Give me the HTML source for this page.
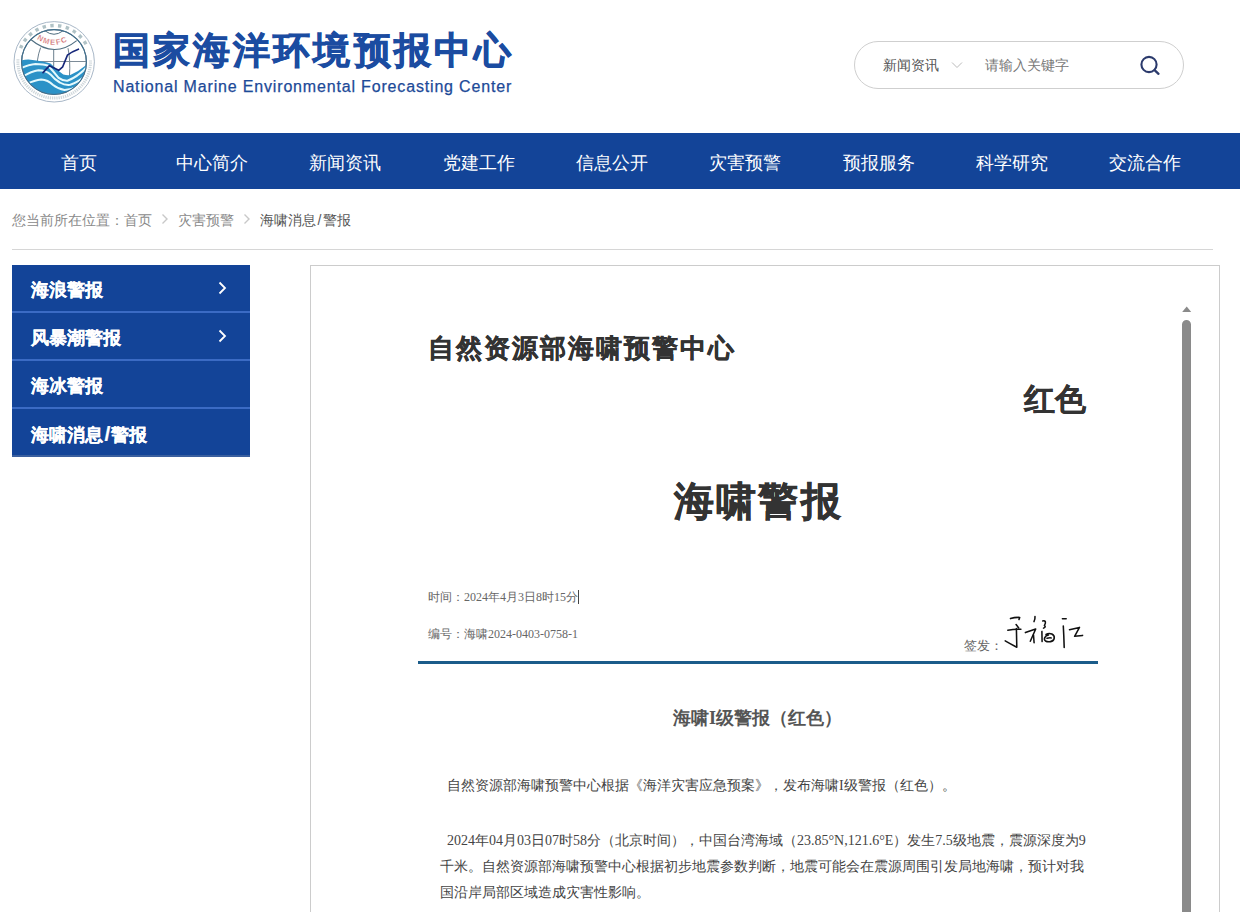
<!DOCTYPE html>
<html><head><meta charset="utf-8">
<style>
*{margin:0;padding:0;box-sizing:border-box}
html,body{width:1240px;height:912px;overflow:hidden;background:#fff;font-family:"Liberation Sans",sans-serif;}
.abs{position:absolute}
#title{left:113px;top:25px;font-size:37px;letter-spacing:3.1px;font-weight:bold;color:#1b4ca1;-webkit-text-stroke:0.8px #1b4ca1;white-space:nowrap;line-height:52px}
#sub{left:113px;top:77px;font-size:16px;color:#1d4a98;white-space:nowrap;line-height:20px;letter-spacing:0.83px;-webkit-text-stroke:0.25px #1d4a98}
#search{left:854px;top:41px;width:330px;height:48px;border:1px solid #cfcfcf;border-radius:24px}
#cat{left:883px;top:55px;font-size:14px;color:#555;line-height:20px}
#kw{left:985px;top:55px;font-size:14px;color:#777;line-height:20px}
#nav{left:0;top:133px;width:1240px;height:56px;background:#134498}
#nav div{position:absolute;top:3px;height:55px;line-height:55px;width:133.33px;text-align:center;color:#fff;font-size:18px}
#crumb{left:12px;top:210px;font-size:14px;color:#8a8a8a;line-height:20px;white-space:nowrap}
#crumb span{position:absolute;top:0}
#hr{left:12px;top:249px;width:1201px;height:1px;background:#d6d6d6}
#side{left:12px;top:265px;width:238px}
#side div{height:48px;background:#134498;border-bottom:2px solid #3b6bc4;color:#fff;font-size:18px;font-weight:bold;line-height:50px;padding-left:19px;position:relative;-webkit-text-stroke:0.2px #fff}
#side div.last{border-bottom-color:#3a5f9f}
#box{left:310px;top:265px;width:910px;height:700px;border:1px solid #cccccc}
.doc{color:#333;white-space:nowrap}
.meta{color:#666;font-size:12px;line-height:16px;white-space:nowrap}
.num{font-family:"Liberation Serif",serif}
.p{color:#444;font-size:14px;line-height:20px;white-space:nowrap}
</style></head><body>
<svg class="abs" style="left:0;top:0" width="110" height="110" viewBox="0 0 110 110">
  <defs>
    <path id="nm" d="M35 37.5 Q54 52 73 37.5"/>
    <path id="rt" d="M21 61 A33.5 33.5 0 0 1 87.5 61"/>
    <path id="rb" d="M19.5 64 A35 35 0 0 0 89 64"/>
    <clipPath id="cl"><circle cx="54" cy="62" r="32.2"/></clipPath>
  </defs>
  <circle cx="54.2" cy="61.8" r="40.2" fill="#fff" stroke="#a9b8c8" stroke-width="1"/>
  <path d="M20.54 48.20 A36.3 36.3 0 0 1 87.86 48.20" fill="none" stroke="#6f8f98" stroke-width="3.4" stroke-dasharray="3.4 4.4" opacity="0.55"/>
  <path d="M17.99 59.27 A36.3 36.3 0 1 0 90.48 60.53" fill="none" stroke="#8a9ea8" stroke-width="3" stroke-dasharray="1.3 0.9" opacity="0.4"/>
  <circle cx="54" cy="62" r="32.4" fill="#fff" stroke="#4f6e80" stroke-width="1.2"/>
  <path d="M45.3 31 Q54 37.5 62.7 31" fill="none" stroke="#4f6e80" stroke-width="1"/>
  <path d="M30.8 39.5 Q54 59 76.7 40.6" fill="none" stroke="#4f6e80" stroke-width="1.1"/>
  <text font-family="Liberation Sans" font-weight="bold" font-size="7.6" fill="#c95656" stroke="#fff" stroke-width="0.25" letter-spacing="1.4"><textPath href="#nm" startOffset="2">NMEFC</textPath></text>
  <path d="M40.6 47.6 Q36 60 37.5 72 M53.7 49.4 L53.7 80 M68 48.2 Q70.5 60 69.5 76" fill="none" stroke="#5a7080" stroke-width="0.9"/>
  <path d="M21.8 61.5 L86.3 61.5" stroke="#7d8c98" stroke-width="1.1"/>
  <g clip-path="url(#cl)">
    <path d="M16 61.8 Q26 58.5 32.5 59.9 Q44 61 50.5 63.4 Q57 70 63.3 74.4 Q67 75.5 70.3 75 Q80 71 90 62 L90 100 L16 100 Z" fill="#2b92c7"/>
    <path d="M20 68.5 Q29 64.5 35.4 64 Q44 64 48.2 65.7 Q54 72 58.6 77.9 Q63 81 67.4 80.8 Q78 77 88 66" fill="none" stroke="#e4f9fd" stroke-width="2"/>
    <path d="M22 77 Q32 71 38.3 70.3 Q46 70.5 50.5 74.4 Q55 80 59.8 82.5 Q65 85.5 70.3 84.8 Q79 82 88 73.5" fill="none" stroke="#e4f9fd" stroke-width="2"/>
    <path d="M26 84.5 Q35 80 41.2 79.6 Q48 80 52.8 84.8 Q58 89 64.5 90 Q71 90 76 87.2 Q82 84 88 79" fill="none" stroke="#e4f9fd" stroke-width="2"/>
  </g>
  <circle cx="54" cy="62" r="32.4" fill="none" stroke="#3f6f8f" stroke-width="1"/>
  <path d="M43 72.6 L49.4 65.7 L58.7 70.3 L62.7 66.8 L67.4 55.2 Q72 51.5 78.4 49.2" fill="none" stroke="#16277a" stroke-width="1.7" stroke-linejoin="round" stroke-linecap="round"/>
</svg>
<div id="title" class="abs">国家海洋环境预报中心</div>
<div id="sub" class="abs">National Marine Environmental Forecasting Center</div>
<div id="search" class="abs"></div>
<div id="cat" class="abs">新闻资讯</div>
<svg class="abs" style="left:950px;top:60px" width="14" height="10" viewBox="0 0 14 10"><path d="M2 2.5 L7 7.5 L12 2.5" fill="none" stroke="#bbb" stroke-width="1"/></svg>
<div id="kw" class="abs">请输入关键字</div>
<svg class="abs" style="left:1138px;top:54px" width="24" height="24" viewBox="0 0 24 24"><circle cx="11" cy="10.5" r="7.6" fill="none" stroke="#2b3a6c" stroke-width="2.1"/><path d="M16.6 16.2 L20.5 19.8" stroke="#2b3a6c" stroke-width="2.3" stroke-linecap="round"/></svg>
<div id="nav" class="abs">
<div style="left:12px">首页</div>
<div style="left:145.33px">中心简介</div>
<div style="left:278.67px">新闻资讯</div>
<div style="left:412px">党建工作</div>
<div style="left:545.33px">信息公开</div>
<div style="left:678.67px">灾害预警</div>
<div style="left:812px">预报服务</div>
<div style="left:945.33px">科学研究</div>
<div style="left:1078.67px">交流合作</div>
</div>
<div id="crumb" class="abs" style="width:400px;height:20px">
<span style="left:0">您当前所在位置：</span>
<span style="left:112px">首页</span>
</div>
<div class="abs" style="left:178px;top:210px;font-size:14px;color:#8a8a8a;line-height:20px;white-space:nowrap">灾害预警</div>
<div class="abs" style="left:260px;top:210px;font-size:14px;color:#555;line-height:20px;white-space:nowrap">海啸消息<span style="margin:0 1.5px 0 1.5px">/</span>警报</div>
<svg class="abs" style="left:158px;top:212px" width="14" height="14" viewBox="0 0 14 14"><path d="M4.5 2.5 L9 7 L4.5 11.5" fill="none" stroke="#c8c8c8" stroke-width="1.4"/></svg>
<svg class="abs" style="left:240px;top:212px" width="14" height="14" viewBox="0 0 14 14"><path d="M4.5 2.5 L9 7 L4.5 11.5" fill="none" stroke="#c8c8c8" stroke-width="1.4"/></svg>
<div id="hr" class="abs"></div>
<div id="side" class="abs">
<div>海浪警报</div>
<div>风暴潮警报</div>
<div>海冰警报</div>
<div class="last">海啸消息<span style="margin:0 1px 0 1.5px;font-size:21px">/</span>警报</div>
</div>
<svg class="abs" style="left:214px;top:280px" width="16" height="16" viewBox="0 0 16 16"><path d="M5.5 2.5 L11 8 L5.5 13.5" fill="none" stroke="#fff" stroke-width="1.8"/></svg>
<svg class="abs" style="left:214px;top:328px" width="16" height="16" viewBox="0 0 16 16"><path d="M5.5 2.5 L11 8 L5.5 13.5" fill="none" stroke="#fff" stroke-width="1.8"/></svg>
<div id="box" class="abs"></div>
<!-- scrollbar -->
<svg class="abs" style="left:1180px;top:300px" width="14" height="620" viewBox="0 0 14 620"><path d="M2.2 12 L11.2 12 L6.7 6.5 Z" fill="#8a8a8a"/><path d="M2 620 L2 24.5 A4.5 4.5 0 0 1 11 24.5 L11 620 Z" fill="#8a8a8a"/></svg>

<div class="abs doc" style="left:428px;top:331px;font-size:26px;letter-spacing:2.05px;font-weight:bold;-webkit-text-stroke:0.4px #333">自然资源部海啸预警中心</div>
<div class="abs doc" style="left:1024px;top:379px;font-size:31px;font-weight:bold;-webkit-text-stroke:0.3px #333">红色</div>
<div class="abs doc" style="left:674px;top:474px;font-size:40px;letter-spacing:2.2px;font-weight:bold;-webkit-text-stroke:0.5px #333">海啸警报</div>

<div class="abs meta" style="left:428px;top:589px">时间：<span class="num">2024</span>年<span class="num">4</span>月<span class="num">3</span>日<span class="num">8</span>时<span class="num">15</span>分</div>
<div class="abs" style="left:578px;top:590px;width:1px;height:14px;background:#444"></div>
<div class="abs meta" style="left:428px;top:626px">编号：海啸<span class="num">2024-0403-0758-1</span></div>
<div class="abs meta" style="left:964px;top:638px;font-size:13px">签发：</div>
<svg class="abs" style="left:1000px;top:610px" width="90" height="45" viewBox="0 0 90 45" fill="none" stroke="#111" stroke-width="1.55" stroke-linecap="round" stroke-linejoin="round">
  <path d="M10.5 8.6 Q15.2 7.1 19.7 7.4 L19.0 9.4"/>
  <path d="M7.8 20.2 Q14.5 19.0 20.9 19.2"/>
  <path d="M16.1 14.5 L18.7 18.0"/>
  <path d="M16.4 18.5 L16.8 37.2 Q10.9 34.1 5.2 30.8"/>
  <path d="M35.0 6.5 Q35.2 9.4 34.0 11.6"/>
  <path d="M25.4 22.6 L35.7 19.0 L30.3 31.3"/>
  <path d="M33.5 25.0 L34.1 32.8"/>
  <path d="M42.7 10.9 Q47.2 10.2 44.4 15.6 Q46.4 16.7 43.5 18.1"/>
  <path d="M41.9 21.4 L42.1 31.6"/>
  <path d="M46.0 24.5 C50 22 55 24.5 54.2 28.5 C53.5 32 48 32.5 45.5 31 C43.5 29.5 44.5 25.5 48.5 25"/>
  <path d="M47.0 28.3 Q49.3 27.6 51.2 27.9"/>
  <path d="M62.4 8.7 L66.2 8.7"/>
  <path d="M63.3 16.0 Q63.9 26.1 64.2 37.4"/>
  <path d="M69.5 19.7 L79.5 17.4 L74.6 26.3 L82.6 25.4"/>
</svg>
<div class="abs" style="left:418px;top:661px;width:680px;height:3px;background:#1b5c8a"></div>

<div class="abs doc" style="left:673px;top:706px;font-size:18px;font-weight:bold;color:#555;line-height:24px">海啸<span class="num">I</span>级警报（红色）</div>

<div class="abs p" style="left:447px;top:775px">自然资源部海啸预警中心根据《海洋灾害应急预案》，发布海啸<span class="num">I</span>级警报（红色）。</div>
<div class="abs p" style="left:447px;top:830px"><span class="num">2024</span>年<span class="num">04</span>月<span class="num">03</span>日<span class="num">07</span>时<span class="num">58</span>分（北京时间），中国台湾海域（<span class="num">23.85°N,121.6°E</span>）发生<span class="num">7.5</span>级地震，震源深度为<span class="num">9</span></div>
<div class="abs p" style="left:440px;top:856px">千米。自然资源部海啸预警中心根据初步地震参数判断，地震可能会在震源周围引发局地海啸，预计对我</div>
<div class="abs p" style="left:440px;top:882px">国沿岸局部区域造成灾害性影响。</div>
</body></html>
